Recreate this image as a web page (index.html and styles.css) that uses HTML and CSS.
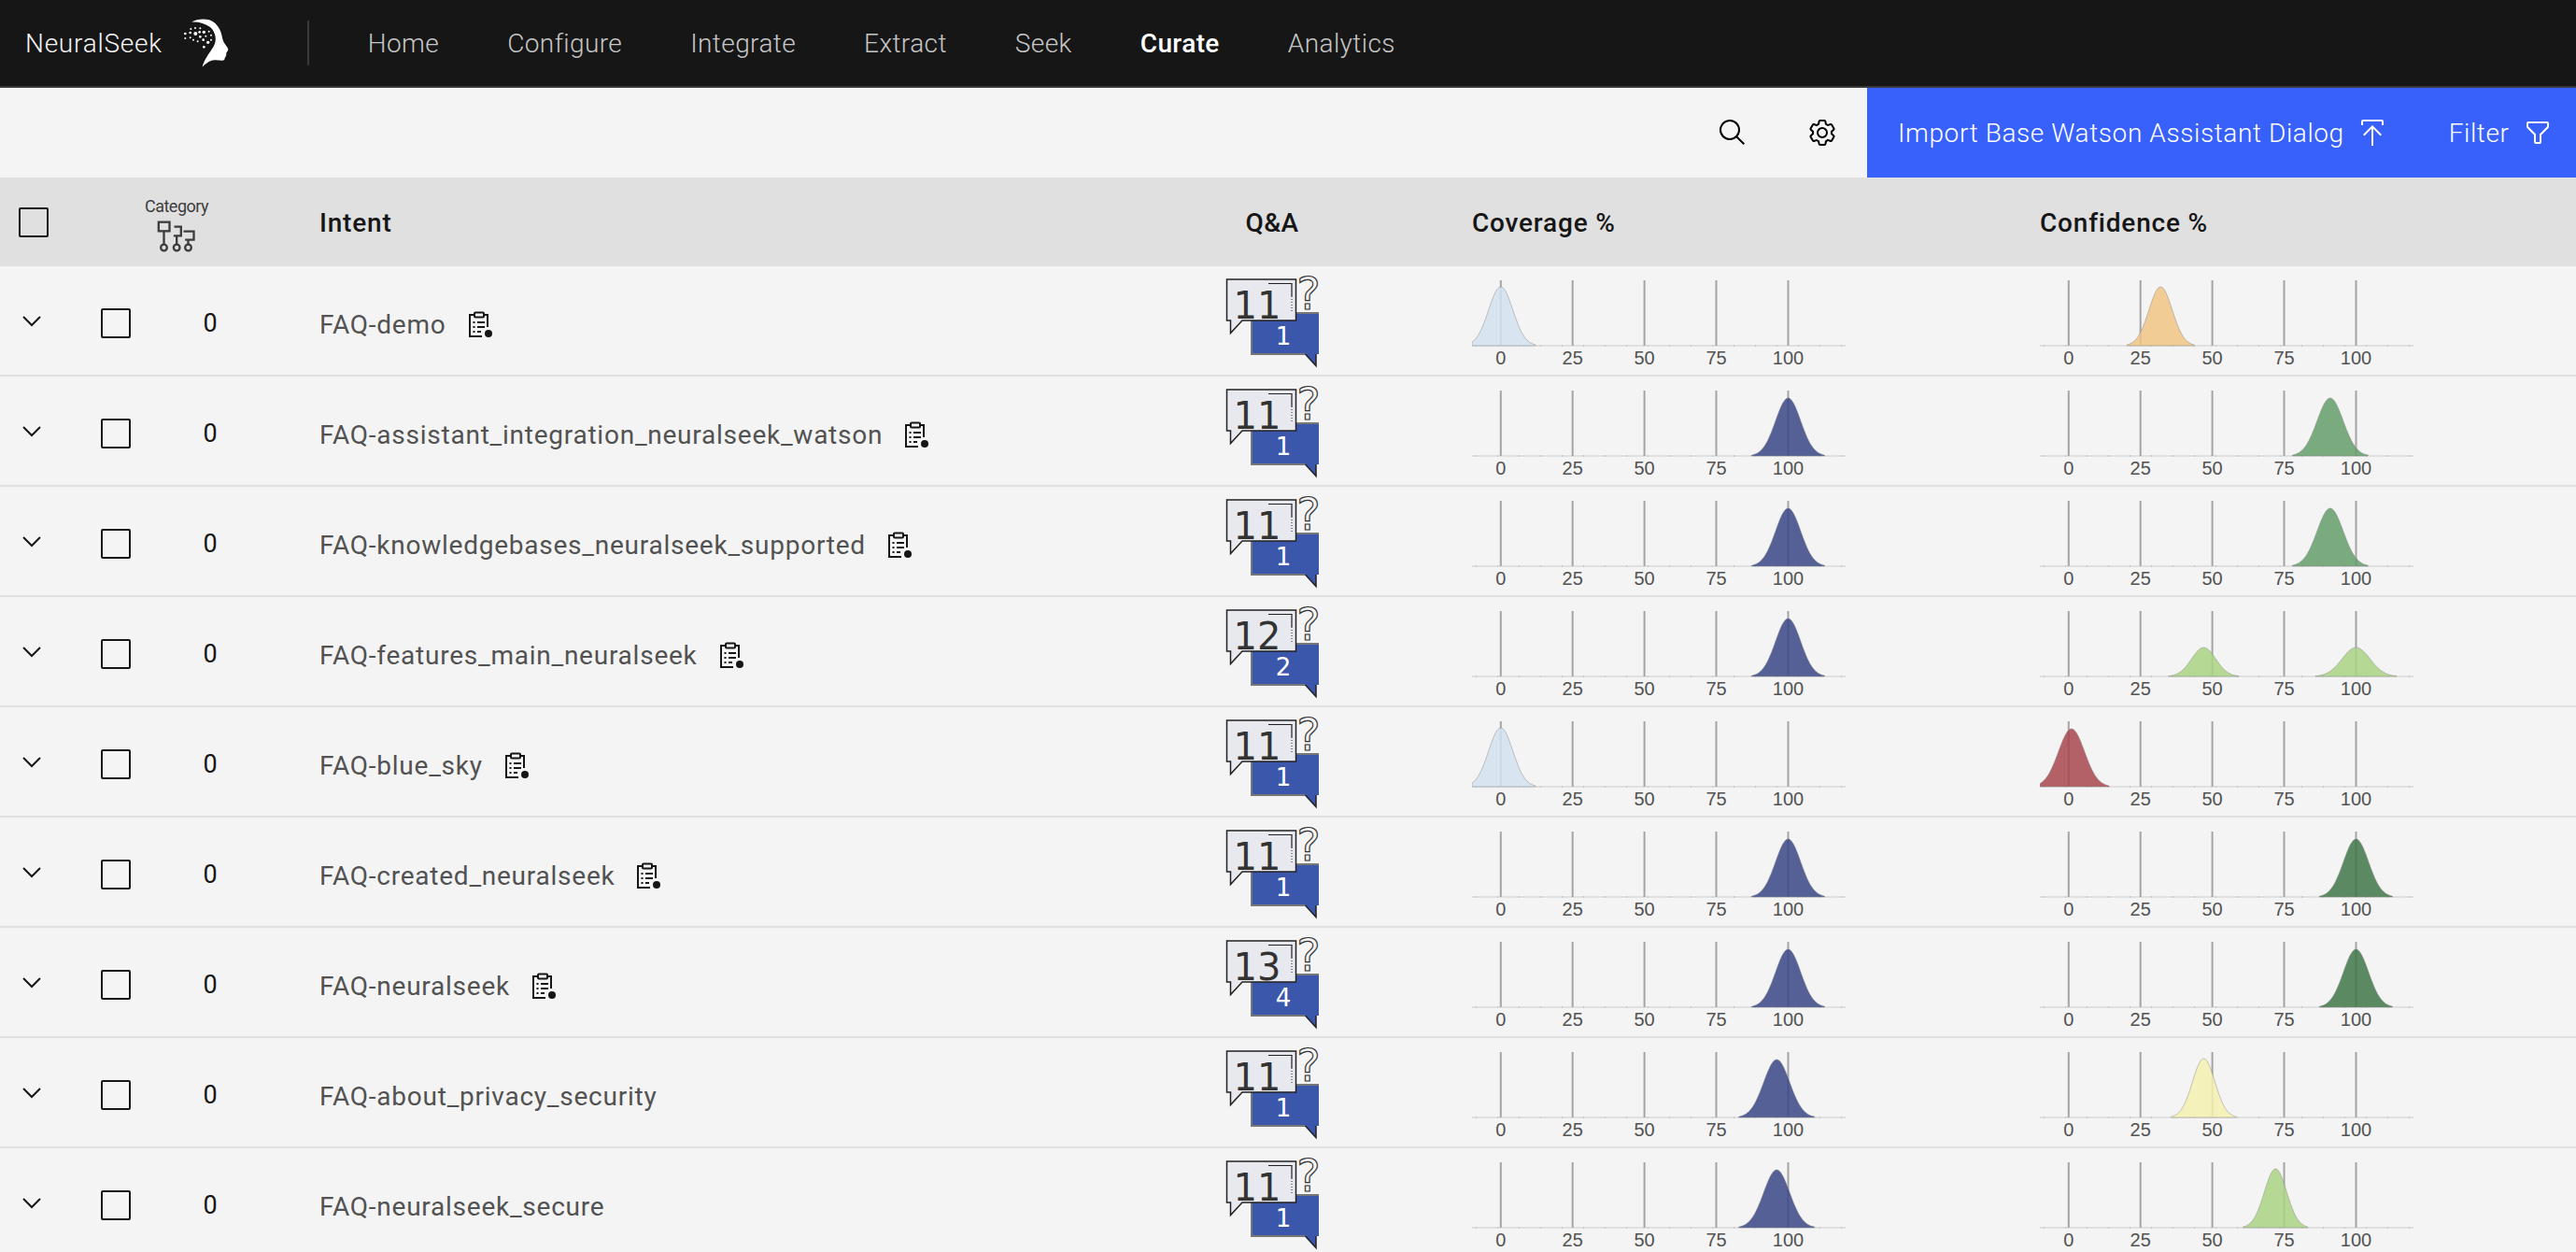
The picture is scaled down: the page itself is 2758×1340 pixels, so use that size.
FILE: index.html
```html
<!DOCTYPE html>
<html>
<head>
  <title>NeuralSeek - Curate</title>
  <link rel="stylesheet" href="styles.css">
</head>
<body>
  <header class="topbar">
    <span class="brand">NeuralSeek</span>
    <svg class="brand-mark" viewBox="0 0 240 210" fill="#fff">
      <path d="M72 38C90 28 120 24 140 36C162 50 168 72 172 92C176 108 190 118 190 127C188 134 182 136 184 142C183 150 178 152 178 158C174 164 160 160 150 160C138 160 128 162 107 182C112 160 128 140 142 118C154 98 152 72 132 54C116 42 92 36 72 38Z"/>
      <circle cx="52" cy="75" r="4"/><circle cx="52" cy="90" r="3"/><circle cx="70" cy="60" r="3"/>
      <circle cx="68" cy="72" r="4"/><circle cx="68" cy="88" r="3"/><circle cx="84" cy="57" r="3"/>
      <circle cx="85" cy="75" r="6"/><circle cx="98" cy="70" r="4"/><circle cx="100" cy="58" r="3"/>
      <circle cx="112" cy="70" r="5"/><circle cx="128" cy="68" r="3"/><circle cx="118" cy="83" r="3"/>
      <circle cx="135" cy="80" r="3"/><circle cx="100" cy="85" r="4"/><circle cx="110" cy="95" r="4"/>
      <circle cx="92" cy="100" r="3"/><circle cx="125" cy="103" r="5"/><circle cx="112" cy="118" r="4"/>
      <circle cx="135" cy="95" r="3"/><circle cx="78" cy="95" r="3"/>
    </svg>
    <span class="topbar-divider"></span>
    <nav class="nav">
      <a class="nav-link">Home</a>
      <a class="nav-link">Configure</a>
      <a class="nav-link">Integrate</a>
      <a class="nav-link">Extract</a>
      <a class="nav-link">Seek</a>
      <a class="nav-link active">Curate</a>
      <a class="nav-link">Analytics</a>
    </nav>
  </header>

  <div class="toolbar">
    <button class="tool-button">
      <svg class="icon" viewBox="0 0 32 32"><path d="M29 27.5859l-7.5521-7.5521a11.0177 11.0177 0 1 0-1.4141 1.4141L27.5859 29ZM4 13a9 9 0 1 1 9 9 9.01 9.01 0 0 1-9-9Z"/></svg>
    </button>
    <button class="tool-button">
      <svg class="icon" viewBox="0 0 32 32"><path d="M27,16.76c0-.25,0-.5,0-.76s0-.51,0-.77l1.92-1.68A2,2,0,0,0,29.3,11L26.94,7a2,2,0,0,0-1.73-1,2,2,0,0,0-.64.1l-2.43.82a11.35,11.35,0,0,0-1.31-.75l-.51-2.52a2,2,0,0,0-2-1.61H13.64a2,2,0,0,0-2,1.61l-.51,2.52a11.48,11.48,0,0,0-1.32.75L7.43,6.06A2,2,0,0,0,6.79,6,2,2,0,0,0,5.06,7L2.7,11a2,2,0,0,0,.41,2.51L5,15.24c0,.25,0,.5,0,.76s0,.51,0,.77L3.11,18.45A2,2,0,0,0,2.7,21L5.06,25a2,2,0,0,0,1.73,1,2,2,0,0,0,.64-.1l2.43-.82a11.35,11.35,0,0,0,1.31.75l.51,2.52a2,2,0,0,0,2,1.61h4.72a2,2,0,0,0,2-1.61l.51-2.52a11.48,11.48,0,0,0,1.32-.75l2.42.82a2,2,0,0,0,.64.1,2,2,0,0,0,1.73-1L29.3,21a2,2,0,0,0-.41-2.51ZM25.21,24l-3.43-1.16a8.86,8.86,0,0,1-2.71,1.57L18.36,28H13.64l-.71-3.55a9.36,9.36,0,0,1-2.7-1.57L6.79,24,4.43,20l2.72-2.4a8.9,8.9,0,0,1,0-3.13L4.43,12,6.79,8l3.43,1.16a8.86,8.86,0,0,1,2.71-1.57L13.64,4h4.72l.71,3.55a9.36,9.36,0,0,1,2.7,1.57L25.21,8,27.57,12l-2.72,2.4a8.9,8.9,0,0,1,0,3.13L27.57,20Z"/><path d="M16,22a6,6,0,1,1,6-6A5.94,5.94,0,0,1,16,22Zm0-10a3.91,3.91,0,0,0-4,4,3.91,3.91,0,0,0,4,4,3.91,3.91,0,0,0,4-4A3.91,3.91,0,0,0,16,12Z"/></svg>
    </button>
    <div class="action-group">
      <button class="action-button import-button">
        <span>Import Base Watson Assistant Dialog</span>
        <svg class="icon" viewBox="0 0 32 32"><path d="M6 18L7.41 19.41 15 11.83 15 30 17 30 17 11.83 24.59 19.41 26 18 16 8 6 18z"/><path d="M6 8V4H26V8h2V4a2 2 0 0 0-2-2H6A2 2 0 0 0 4 4V8Z"/></svg>
      </button>
      <button class="action-button filter-button">
        <span>Filter</span>
        <svg class="icon" viewBox="0 0 32 32"><path d="M18,28H14a2,2,0,0,1-2-2V18.41L4.59,11A2,2,0,0,1,4,9.59V6A2,2,0,0,1,6,4H26a2,2,0,0,1,2,2V9.59A2,2,0,0,1,27.41,11L20,18.41V26A2,2,0,0,1,18,28ZM6,6V9.59l8,8V26h4V17.59l8-8V6Z"/></svg>
      </button>
    </div>
  </div>

  <div class="table-head">
    <div class="head-check"><span class="checkbox"></span></div>
    <div class="head-category">
      <span class="category-label">Category</span>
      <svg class="category-icon" viewBox="55 100 125 105" fill="none" stroke="#3d3d3d" stroke-width="7">
        <rect x="60" y="108" width="35" height="29"/>
        <path d="M77 137V180"/><circle cx="77" cy="190" r="10"/>
        <path d="M110 123H132V152H108M118 152V180"/><circle cx="118" cy="190" r="10"/>
        <path d="M140 138H173V165H145M155 165V180"/><circle cx="155" cy="190" r="10"/>
      </svg>
    </div>
    <div class="head-title head-intent">Intent</div>
    <div class="head-title head-qa">Q&amp;A</div>
    <div class="head-title">Coverage %</div>
    <div class="head-title">Confidence %</div>
  </div>

  <div id="intent-list"></div>

  <script src="script.js"></script>
</body>
</html>
```

FILE: styles.css
```css
html, body {
  height: 100%;
  overflow: hidden;
}

body {
  margin: 0;
  background-color: #f4f4f4;
  color: #161616;
  font-family: Roboto, "Noto Sans", sans-serif;
  font-size: 28px;
}

.topbar {
  display: flex;
  align-items: center;
  height: 92px;
  background-color: #161616;
  border-bottom: 2px solid #393939;
}

.brand {
  margin-left: 27px;
  color: #f4f4f4;
  font-weight: 300;
  letter-spacing: 0.75px;
}

.brand-mark {
  width: 80px;
  height: 70px;
  margin-left: 7px;
}

.topbar-divider {
  width: 2px;
  height: 48px;
  margin-left: 68px;
  background-color: #393939;
}

.nav {
  display: flex;
  gap: 73px;
  margin-left: 63px;
}

.nav-link {
  color: #c6c6c6;
  font-weight: 300;
  letter-spacing: 0.4px;
}

.nav-link.active {
  color: #fff;
  font-weight: 500;
}

.toolbar {
  display: flex;
  justify-content: flex-end;
  height: 96px;
}

.tool-button {
  display: flex;
  align-items: center;
  justify-content: center;
  width: 96px;
  padding: 0;
  background: none;
  border: none;
}

.icon {
  width: 32px;
  height: 32px;
  flex: none;
}

.action-group {
  display: flex;
  width: 759px;
  background-color: #3861fb;
}

.action-button {
  display: flex;
  align-items: center;
  gap: 14px;
  padding: 0;
  background: none;
  border: none;
  color: #fff;
  font: inherit;
  font-weight: 300;
  letter-spacing: 0.6px;
}

.action-button .icon {
  fill: #fff;
}

.import-button {
  padding-left: 33px;
}

.filter-button {
  margin-left: 66px;
}

.table-head {
  display: grid;
  grid-template-columns: 88px 202px 1018px 268px 608px 1fr;
  align-items: center;
  height: 95px;
  background-color: #e0e0e0;
}

.head-title {
  padding-top: 2px;
  font-weight: 500;
  letter-spacing: 0.8px;
}

.head-check {
  padding-left: 20px;
}

.head-category {
  display: flex;
  flex-direction: column;
  align-items: center;
  padding-top: 4px;
}

.category-label {
  font-size: 18px;
  color: #3d3d3d;
  letter-spacing: -0.5px;
}

.category-icon {
  width: 42px;
  height: 35px;
  margin-top: 4px;
}

.head-intent {
  padding-left: 52px;
}

.head-qa {
  width: 108px;
  letter-spacing: 0.4px;
  text-align: center;
}

.checkbox {
  display: block;
  box-sizing: border-box;
  width: 32px;
  height: 32px;
  border: 2px solid #161616;
  border-radius: 2px;
}

.intent-row {
  display: grid;
  grid-template-columns: 108px 52px 130px 1018px 268px 608px 1fr;
  align-items: center;
  height: 116px;
  border-bottom: 2px solid #e0e0e0;
}

.expand-cell {
  padding-top: 2px;
}

.expand {
  display: block;
  width: 20px;
  height: 12px;
  margin-left: 24px;
}

.check-cell {
  padding-top: 6px;
}

.count {
  padding-top: 5px;
  text-align: center;
  font-size: 27px;
}

.intent-name {
  display: flex;
  align-items: center;
  gap: 23px;
  padding: 8px 0 0 52px;
  color: #525252;
  letter-spacing: 0.76px;
}

.note-icon {
  width: 27px;
  height: 29px;
}

.qa-icon {
  display: block;
  width: 108px;
  height: 102px;
  overflow: visible;
}

.qa-cell,
.chart-cell {
  align-self: start;
}

.qa-cell {
  padding-top: 10px;
}

.chart-cell {
  padding-top: 15px;
}

.chart {
  display: block;
  width: 400px;
  height: 100px;
}

.chart-axis {
  stroke: #e0e0e0;
  stroke-width: 2;
}

.chart-axis-marks {
  stroke: #c6c6c6;
  stroke-width: 2;
  stroke-dasharray: 1 22;
}

.chart-tick {
  stroke: #a4a4a4;
  stroke-width: 2;
}

.chart-label {
  fill: #525252;
  font-family: "Liberation Sans", sans-serif;
  font-size: 20px;
  text-anchor: middle;
}

.chart-area {
  fill-opacity: 0.85;
  stroke: #8d8d8d;
  stroke-opacity: 0.5;
}

.qa-text {
  font-family: "DejaVu Sans", sans-serif;
  text-anchor: middle;
}

.qa-total {
  fill: #333;
  font-size: 40px;
}

.qa-answers {
  fill: #fff;
  font-size: 26px;
}

.qa-question {
  fill: #f4f4f4;
  stroke: #333;
  stroke-width: 1.2;
  font-size: 48px;
}
```

FILE: script.js
```js
// colours of the distribution curves
const BLUE_PALE = '#d4e1f0';
const BLUE_DARK = '#374585';
const ORANGE = '#f0c484';
const GREEN = '#639e6a';
const GREEN_DARK = '#3f7748';
const GREEN_LIGHT = '#aad284';
const RED = '#a7474d';
const YELLOW = '#f5f0af';

// each curve is [peak value, spread in px, height in px, colour]
const intents = [
  { name: 'FAQ-demo', note: true, total: 11, answers: 1,
    coverage: [[0, 13, 63, BLUE_PALE]], confidence: [[32, 12.5, 63, ORANGE]] },
  { name: 'FAQ-assistant_integration_neuralseek_watson', note: true, total: 11, answers: 1,
    coverage: [[100, 13.5, 62, BLUE_DARK]], confidence: [[91, 14, 62, GREEN]] },
  { name: 'FAQ-knowledgebases_neuralseek_supported', note: true, total: 11, answers: 1,
    coverage: [[100, 13.5, 62, BLUE_DARK]], confidence: [[91, 14, 62, GREEN]] },
  { name: 'FAQ-features_main_neuralseek', note: true, total: 12, answers: 2,
    coverage: [[100, 13.5, 62, BLUE_DARK]], confidence: [[47, 13, 31, GREEN_LIGHT], [100, 15, 31, GREEN_LIGHT]] },
  { name: 'FAQ-blue_sky', note: true, total: 11, answers: 1,
    coverage: [[0, 13, 63, BLUE_PALE]], confidence: [[1, 14, 62, RED]] },
  { name: 'FAQ-created_neuralseek', note: true, total: 11, answers: 1,
    coverage: [[100, 13.5, 62, BLUE_DARK]], confidence: [[100, 13.5, 62, GREEN_DARK]] },
  { name: 'FAQ-neuralseek', note: true, total: 13, answers: 4,
    coverage: [[100, 13.5, 62, BLUE_DARK]], confidence: [[100, 13.5, 62, GREEN_DARK]] },
  { name: 'FAQ-about_privacy_security', note: false, total: 11, answers: 1,
    coverage: [[96, 14, 62, BLUE_DARK]], confidence: [[47, 12, 63, YELLOW]] },
  { name: 'FAQ-neuralseek_secure', note: false, total: 11, answers: 1,
    coverage: [[96, 14, 62, BLUE_DARK]], confidence: [[72, 12, 63, GREEN_LIGHT]] }
];

const CHART_WIDTH = 400;
const AXIS_Y = 70;

function scaleX(value) {
  return (value + 10) * CHART_WIDTH / 130;
}

function curvePath(curve) {
  const [peak, spread, height] = curve;
  const mid = scaleX(peak);
  const left = Math.max(0, mid - spread * 2.9);
  const right = Math.min(CHART_WIDTH, mid + spread * 2.9);
  let d = 'M' + left.toFixed(1) + ' ' + AXIS_Y;
  for (let x = left; x <= right; x += 1) {
    const y = AXIS_Y - height * Math.exp(-Math.pow((x - mid) / spread, 2) / 2);
    d += 'L' + x.toFixed(1) + ' ' + y.toFixed(1);
  }
  return d + 'L' + right.toFixed(1) + ' ' + AXIS_Y + 'Z';
}

function chartSvg(curves) {
  let svg = '<svg class="chart" viewBox="0 0 400 100">';
  svg += '<line class="chart-axis" x1="0" y1="70" x2="400" y2="70"/>';
  svg += '<line class="chart-axis-marks" x1="4" y1="70" x2="400" y2="70"/>';
  [0, 25, 50, 75, 100].forEach(function(value) {
    const x = scaleX(value).toFixed(1);
    svg += '<line class="chart-tick" x1="' + x + '" y1="0" x2="' + x + '" y2="70"/>';
    svg += '<text class="chart-label" x="' + x + '" y="90">' + value + '</text>';
  });
  curves.forEach(function(curve) {
    svg += '<path class="chart-area" fill="' + curve[3] + '" d="' + curvePath(curve) + '"/>';
  });
  return svg + '</svg>';
}

function qaSvg(total, answers) {
  return '<svg class="qa-icon" viewBox="0 0 108 102">' +
    '<text class="qa-text qa-question" x="93" y="36">?</text>' +
    '<path fill="#3b57ab" d="M32 40H104V84H101V96.5L89.5 84H32Z"/>' +
    '<path fill="none" stroke="#777" stroke-width="2" d="M104 40H32V84H89.5"/>' +
    '<path fill="none" stroke="#222" stroke-width="1.5" d="M89.5 84L101 96.5V84"/>' +
    '<path fill="#e8e9ee" stroke="#222" stroke-width="1.5" d="M5.5 4H79.5V48H22L9.5 61.5V48H5.5Z"/>' +
    '<path fill="none" stroke="#222" stroke-width="1.2" d="M50 8.5H75V22"/>' +
    '<path fill="none" stroke="#444" stroke-width="1.2" stroke-dasharray="1 2" d="M75 22V38"/>' +
    '<text class="qa-text qa-total" x="38" y="46">' + total + '</text>' +
    '<text class="qa-text qa-answers" x="66" y="74">' + answers + '</text>' +
    '</svg>';
}

const noteIcon = '<svg class="note-icon" viewBox="0 0 27 29" fill="none" stroke="#161616" stroke-width="2">' +
  '<path d="M7 4H2V27H15M17 4H21V17"/>' +
  '<rect x="7" y="1.5" width="10" height="5" rx="1"/>' +
  '<path d="M5.5 12H7.5M10 12H18M5.5 17H7.5M10 17H18M5.5 22H7.5M10 22H14"/>' +
  '<circle cx="22" cy="24" r="4" fill="#161616" stroke="none"/></svg>';

const chevron = '<svg class="expand" viewBox="0 0 20 12" fill="none" stroke="#161616" stroke-width="2"><path d="M1 1L10 10L19 1"/></svg>';

const list = document.getElementById('intent-list');

intents.forEach(function(intent) {
  const row = document.createElement('div');
  row.classList.add('intent-row');
  row.innerHTML =
    '<div class="expand-cell">' + chevron + '</div>' +
    '<div class="check-cell"><span class="checkbox"></span></div>' +
    '<div class="count">0</div>' +
    '<div class="intent-name"><span>' + intent.name + '</span>' + (intent.note ? noteIcon : '') + '</div>' +
    '<div class="qa-cell">' + qaSvg(intent.total, intent.answers) + '</div>' +
    '<div class="chart-cell">' + chartSvg(intent.coverage) + '</div>' +
    '<div class="chart-cell">' + chartSvg(intent.confidence) + '</div>';
  list.appendChild(row);
});
```
